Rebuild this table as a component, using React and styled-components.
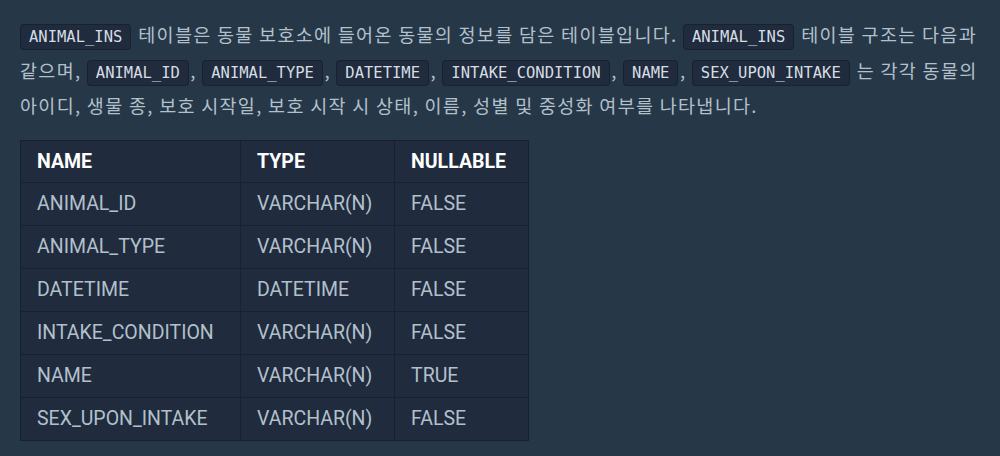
import React from "react";
import styled, { createGlobalStyle } from "styled-components";

const Global = createGlobalStyle`
  html, body {
    margin: 0;
    padding: 0;
    background: #263747;
  }
`;

const Page = styled.div`
  padding: 17px 20px;
  font-family: "Noto Sans CJK KR", "Noto Sans", sans-serif;
  color: #b2c0cc;
`;

const Para = styled.p`
  margin: 0;
  font-size: 18.5px;
  letter-spacing: 1.3px;
  line-height: 35.5px;
  word-break: keep-all;
`;

const Code = styled.code`
  font-family: "DejaVu Sans Mono", "Liberation Mono", monospace;
  font-size: 15.5px;
  letter-spacing: 0;
  line-height: 20px;
  color: #d6dde3;
  background: #202b3d;
  border: 1px solid #172130;
  border-radius: 4px;
  padding: 3px 8px;
  margin: 0 1.5px 0 0;
`;

const Table = styled.table`
  margin-top: 16px;
  border-collapse: collapse;
  background: #202b3d;
  font-family: Roboto, "Noto Sans", sans-serif;
  font-size: 19.5px;
`;

const Th = styled.th`
  text-align: left;
  color: #fff;
  font-weight: 700;
  height: 42px;
  padding: 0 16px;
  border: 1px solid #172130;
  box-sizing: border-box;
  width: ${(p) => p.$w}px;
`;

const Td = styled.td`
  height: 42px;
  padding: 0 16px;
  border: 1px solid #172130;
  color: #b2c0cc;
  white-space: nowrap;
`;

const rows = [
  ["ANIMAL_ID", "VARCHAR(N)", "FALSE"],
  ["ANIMAL_TYPE", "VARCHAR(N)", "FALSE"],
  ["DATETIME", "DATETIME", "FALSE"],
  ["INTAKE_CONDITION", "VARCHAR(N)", "FALSE"],
  ["NAME", "VARCHAR(N)", "TRUE"],
  ["SEX_UPON_INTAKE", "VARCHAR(N)", "FALSE"],
];

export default function App() {
  return (
    <Page>
      <Global />
      <Para>
        <Code>ANIMAL_INS</Code> 테이블은 동물 보호소에 들어온 동물의 정보를 담은 테이블입니다.{" "}
        <Code>ANIMAL_INS</Code> 테이블 구조는 다음과 같으며, <Code>ANIMAL_ID</Code>,{" "}
        <Code>ANIMAL_TYPE</Code>, <Code>DATETIME</Code>, <Code>INTAKE_CONDITION</Code>,{" "}
        <Code>NAME</Code>, <Code>SEX_UPON_INTAKE</Code> 는 각각 동물의 아이디, 생물 종, 보호 시작일,
        보호 시작 시 상태, 이름, 성별 및 중성화 여부를 나타냅니다.
      </Para>
      <Table>
        <thead>
          <tr>
            <Th $w={220}>NAME</Th>
            <Th $w={154}>TYPE</Th>
            <Th $w={134}>NULLABLE</Th>
          </tr>
        </thead>
        <tbody>
          {rows.map((r) => (
            <tr key={r[0]}>
              {r.map((c, i) => (
                <Td key={i}>{c}</Td>
              ))}
            </tr>
          ))}
        </tbody>
      </Table>
    </Page>
  );
}
